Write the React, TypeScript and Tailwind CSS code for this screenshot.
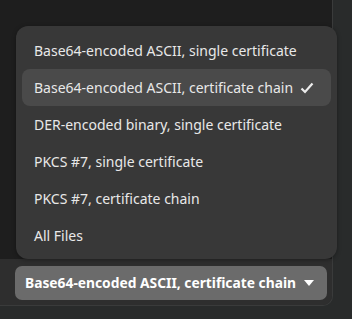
const items = [
  "Base64-encoded ASCII, single certificate",
  "Base64-encoded ASCII, certificate chain",
  "DER-encoded binary, single certificate",
  "PKCS #7, single certificate",
  "PKCS #7, certificate chain",
  "All Files",
];
const selected = 1;

export default function App() {
  return (
    <div
      className="relative w-[352px] h-[319px] overflow-hidden bg-[#292b2b]"
      style={{ fontFamily: '"Noto Sans", "Open Sans", sans-serif' }}
    >
      <div className="w-[333px] h-[306px] flex flex-col rounded-br-[10px] overflow-hidden border-r border-b border-[#3a3b3b]">
        <div className="flex-1 bg-[#1e1e1e]" />
        <div className="h-[46px] bg-[#2e2e2e] px-[15px] pt-[7px]">
          <button className="w-[312px] h-[34px] rounded-[7px] bg-[#6b6b6b] flex items-center justify-between pl-[10px] pr-[12px] text-white font-bold text-[13.8px]">
            <span>Base64-encoded ASCII, certificate chain</span>
            <svg width="12" height="8" viewBox="0 0 12 8">
              <path d="M1 1h10L6 7z" fill="white" />
            </svg>
          </button>
        </div>
      </div>

      {/* popover menu */}
      <div className="absolute left-[16px] top-[26px] w-[321px] rounded-[12px] bg-[#383838] px-[6px] pt-[6px] pb-[5px] shadow-[0_1px_4px_rgba(0,0,0,0.35)]">
        {items.map((item, i) => (
          <div
            key={item}
            className={`h-[37px] flex items-center justify-between pl-[12px] pr-[17px] rounded-[8px] text-[14px] text-[#e8e8e8] ${
              i === selected ? "bg-[#4a4a4a]" : ""
            }`}
          >
            <span>{item}</span>
            {i === selected && (
              <svg width="14" height="12" viewBox="0 0 14 12">
                <path d="M1.5 6.5L5 10L12.5 1.5" fill="none" stroke="#ececec" strokeWidth="2.2" />
              </svg>
            )}
          </div>
        ))}
      </div>
    </div>
  );
}
